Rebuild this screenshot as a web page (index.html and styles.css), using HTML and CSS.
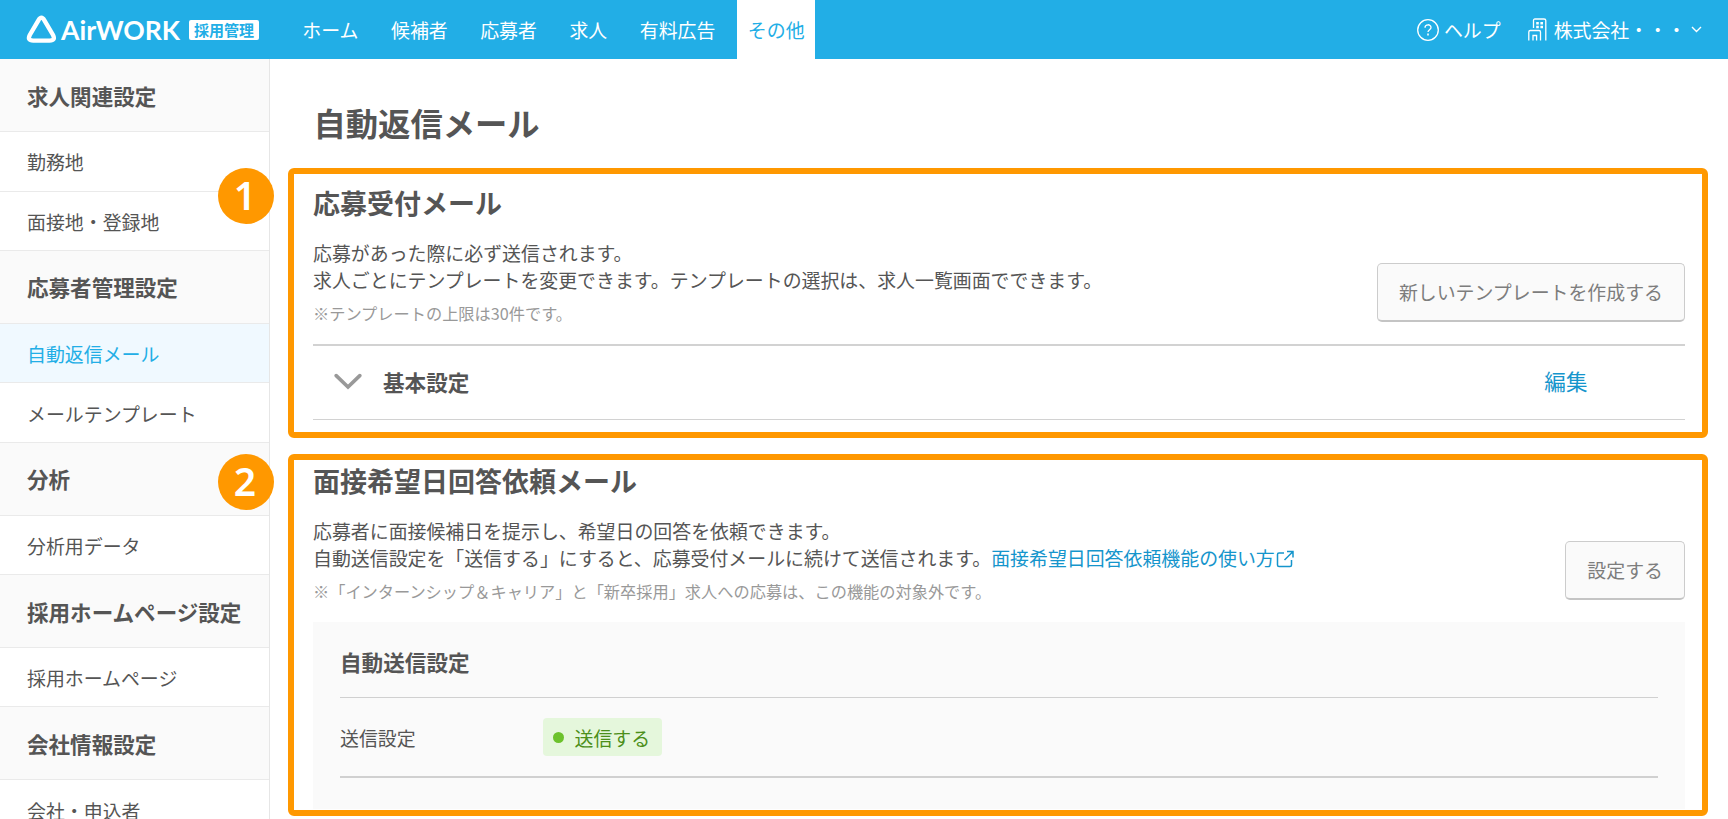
FILE: index.html
```html
<!DOCTYPE html>
<html lang="ja">
<head>
<meta charset="utf-8">
<title>自動返信メール</title>
<link rel="stylesheet" href="styles.css">
</head>
<body>
<header class="header">
  <svg class="logo" width="160" height="34" viewBox="0 0 160 34">
    <path d="M12.4 7.3 Q15.4 2.2 18.4 7.3 L27 22 Q29.8 27.6 23.6 27.6 H7.2 Q1 27.6 3.8 22 Z" fill="none" stroke="#fff" stroke-width="4.4"/>
    <text class="logo-text" x="35" y="26.5" textLength="119" lengthAdjust="spacingAndGlyphs">AirWORK</text>
  </svg>
  <span class="logo-tag">採用管理</span>
  <nav class="nav">
    <a class="nav-item">ホーム</a>
    <a class="nav-item">候補者</a>
    <a class="nav-item">応募者</a>
    <a class="nav-item">求人</a>
    <a class="nav-item">有料広告</a>
    <a class="nav-item nav-current">その他</a>
  </nav>
  <div class="account">
    <svg width="22" height="22" viewBox="0 0 22 22" fill="none" stroke="#fff" stroke-width="1.3"><circle cx="11" cy="11" r="10.3"/><path d="M8 8.7C8 4.8 14 4.9 14 8.4C14 10.6 11 10.7 11 13"/><path d="M11 14.6V16.4" stroke-width="1.6"/></svg>
    <span class="help">ヘルプ</span>
    <svg class="building" width="19" height="23" viewBox="0 0 19 23" fill="none" stroke="#fff" stroke-width="1.3"><path d="M5.5 10V2.5Q5.5 1 7 1H16Q17.8 1 17.8 2.5V22.5M.8 22.5V14Q.8 12.5 2.3 12.5H11Q12.5 12.5 12.5 14V22.5M5 22.5V17.5H8.6V22.5"/><path d="M8.2 5.2H10.8M12.4 5.2H15M8.2 9H10.8M12.4 9H15" stroke-width="2.5"/></svg>
    <span>株式会社・・・</span>
    <svg class="caret" width="11" height="7" viewBox="0 0 11 7" fill="none" stroke="#fff" stroke-width="1.4"><path d="M1 1L5.5 5.5L10 1"/></svg>
  </div>
</header>
<div class="body">
  <aside class="sidebar">
    <h2 class="side-head">求人関連設定</h2>
    <a class="side-item">勤務地</a>
    <a class="side-item">面接地・登録地</a>
    <h2 class="side-head">応募者管理設定</h2>
    <a class="side-item side-current">自動返信メール</a>
    <a class="side-item">メールテンプレート</a>
    <h2 class="side-head">分析</h2>
    <a class="side-item">分析用データ</a>
    <h2 class="side-head">採用ホームページ設定</h2>
    <a class="side-item">採用ホームページ</a>
    <h2 class="side-head">会社情報設定</h2>
    <a class="side-item">会社・申込者</a>
  </aside>
  <main class="main">
    <h1 class="title">自動返信メール</h1>
    <section class="frame frame-first">
      <span class="badge">1</span>
      <h2 class="section-title">応募受付メール</h2>
      <div class="intro">
        <div>
          <p class="lead">応募があった際に必ず送信されます。<br>求人ごとにテンプレートを変更できます。テンプレートの選択は、求人一覧画面でできます。</p>
          <p class="note">※テンプレートの上限は30件です。</p>
        </div>
        <button class="button">新しいテンプレートを作成する</button>
      </div>
      <div class="accordion">
        <svg width="28" height="18" viewBox="0 0 28 18" fill="none" stroke="#999" stroke-width="3.6" stroke-linecap="round"><path d="M2.2 2.6L14 14L25.8 2.6"/></svg>
        <h3 class="sub-title">基本設定</h3>
        <a class="edit">編集</a>
      </div>
    </section>
    <section class="frame frame-second">
      <span class="badge">2</span>
      <h2 class="section-title">面接希望日回答依頼メール</h2>
      <div class="intro">
        <div>
          <p class="lead">応募者に面接候補日を提示し、希望日の回答を依頼できます。<br>自動送信設定を「送信する」にすると、応募受付メールに続けて送信されます。<a class="link">面接希望日回答依頼機能の使い方<svg class="external" width="19" height="18" viewBox="0 0 19 18" fill="none" stroke="currentColor" stroke-width="1.5"><path d="M8 3H3Q1.5 3 1.5 4.5V15Q1.5 16.5 3 16.5H14Q15.5 16.5 15.5 15V10M11 1.5H17V7.5M17 1.5L8.5 10"/></svg></a></p>
          <p class="note">※「インターンシップ＆キャリア」と「新卒採用」求人への応募は、この機能の対象外です。</p>
        </div>
        <button class="button">設定する</button>
      </div>
      <div class="panel">
        <h3 class="sub-title panel-title">自動送信設定</h3>
        <div class="setting">
          <span class="setting-name">送信設定</span>
          <span class="chip"><i class="dot"></i>送信する</span>
        </div>
      </div>
    </section>
  </main>
</div>
</body>
</html>
```

FILE: styles.css
```css
* { box-sizing: border-box; }
body {
  margin: 0;
  height: 819px;
  overflow: hidden;
  background: #fff;
  color: #555;
  font: 18.92px/27px "Noto Sans CJK JP", sans-serif;
}
h1, h2, h3, p { margin: 0; }
.header {
  display: flex;
  align-items: center;
  height: 59.3px;
  padding: 0 26px;
  background: #22aee6;
  color: #fff;
}
.logo { flex: none; margin-top: 1px; }
.logo-text { font: 700 27px Lato, sans-serif; fill: #fff; }
.logo-tag {
  width: 70px;
  height: 20px;
  margin-left: 3px;
  border-radius: 2px;
  background: #fff;
  color: #22aee6;
  font-size: 15px;
  font-weight: 700;
  line-height: 20px;
  text-align: center;
}
.nav { display: flex; gap: 10.8px; height: 100%; margin-left: 32.5px; }
.nav-item { padding: 0 10.85px; line-height: 60px; }
.nav-current { background: #fff; color: #22aee6; }
.account { display: flex; align-items: center; margin-left: auto; line-height: 61px; }
.help { margin: 0 27px 0 5px; }
.building { margin-right: 7px; }
.caret { margin-left: 5px; }
.body { display: flex; height: 760px; }
.sidebar { flex: none; width: 270px; border-right: 1px solid #e6e6e6; }
.side-head, .side-item {
  display: flex;
  align-items: center;
  padding-left: 27px;
  border-bottom: 1px solid #eaeaea;
}
.side-head { height: 72.8px; background: #fafafa; font-size: 21.55px; font-weight: 700; }
.side-item { height: 59.5px; padding-top: 1.2px; }
.side-current { background: #f0f9ff; color: #22aee6; }
.main { flex: 1; padding: 39px 20px 0 18px; }
.title { height: 70px; padding-left: 25.5px; font-size: 32.3px; line-height: 48px; }
.frame {
  position: relative;
  border: 6px solid #ff9800;
  border-radius: 6px;
  padding: 0 17px 0 19px;
}
.frame-first { height: 270px; padding-top: 9px; }
.frame-second { height: 362px; margin-top: 16px; padding-top: 1px; }
.badge {
  position: absolute;
  top: -6px;
  left: -76px;
  width: 56px;
  height: 56px;
  padding-right: 2px;
  border-radius: 50%;
  background: #ff9800;
  color: #fff;
  font-family: "Noto Sans", sans-serif;
  font-size: 39px;
  font-weight: 600;
  line-height: 54px;
  text-align: center;
}
.section-title { font-size: 27px; line-height: 40px; }
.intro { display: flex; justify-content: space-between; padding-top: 16px; }
.lead { white-space: nowrap; }
.note { margin-top: 8px; color: #999; font-size: 16.22px; line-height: 24px; }
.button {
  height: 59px;
  margin-top: 24px;
  padding: 0 21px 1px;
  border: 1px solid #ccc;
  border-bottom: 2px solid #c4c4c4;
  border-radius: 5px;
  background: #fafafa;
  color: #7d7d7d;
  font: inherit;
}
.accordion {
  display: flex;
  align-items: center;
  height: 76px;
  margin-top: 19px;
  padding: 0 97.5px 2px 21px;
  border: solid #d2d2d2;
  border-width: 2px 0 1px;
}
.sub-title { font-size: 21.6px; line-height: 32px; }
.accordion .sub-title { margin-left: 21px; }
.edit { margin-left: auto; padding-bottom: 2px; color: #1595cc; font-size: 21.6px; }
.link { color: #1595cc; }
.external { margin-left: 1px; vertical-align: -2px; }
.panel { height: 187px; margin-top: 19px; padding: 24px 27px 0; background: #fafafa; }
.panel-title { height: 51px; }
.setting {
  display: flex;
  align-items: center;
  height: 81px;
  border: solid #d0d0d0;
  border-width: 1px 0 2px;
}
.setting-name { width: 202.5px; }
.chip {
  display: flex;
  align-items: center;
  height: 38px;
  padding: 0 12px 0 10px;
  border-radius: 4px;
  background: #e5f7dc;
  color: #4c8f1a;
}
.dot { width: 11px; height: 11px; margin-right: 11px; border-radius: 50%; background: #6cc22c; }
```
